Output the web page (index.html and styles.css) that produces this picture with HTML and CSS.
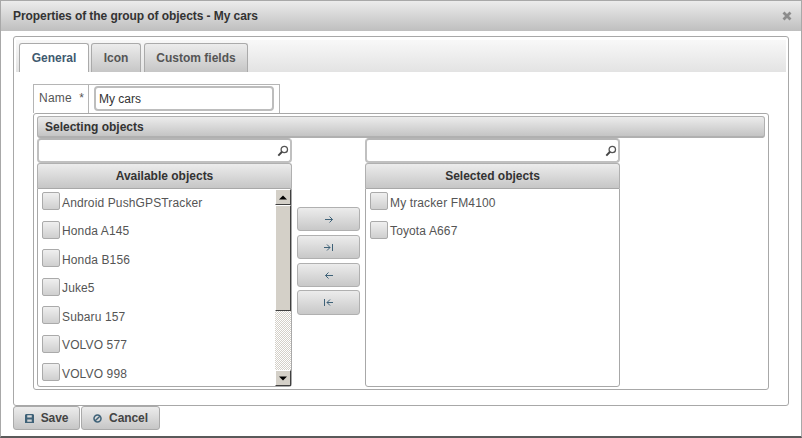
FILE: index.html
```html
<!DOCTYPE html>
<html lang="en">
<head>
<meta charset="utf-8">
<title>Properties of the group of objects</title>
<link rel="stylesheet" href="styles.css">
</head>
<body>
<div class="dialog">
  <header class="titlebar">
    <span class="title">Properties of the group of objects - My cars</span>
    <svg class="close" width="10" height="10" viewBox="0 0 10 10"><path d="M1.5 1.5l7 7M8.5 1.5l-7 7" stroke="#8c8c8c" stroke-width="2.8" fill="none"/></svg>
  </header>
  <section class="panel">
    <nav class="tabs">
      <span class="tab tab-active tab-general">General</span>
      <span class="tab tab-icon">Icon</span>
      <span class="tab tab-custom">Custom fields</span>
    </nav>
    <div class="content">
      <div class="name-row">
        <label class="name-label">Name&nbsp; *</label>
        <div class="name-cell"><input class="name-input" type="text" value="My cars"></div>
      </div>
      <div class="group">
        <div class="group-head">Selecting objects</div>
        <div class="columns">
          <div class="col">
            <div class="search">
              <input class="search-input" type="text">
              <svg class="lens" width="12" height="12" viewBox="0 0 12 12"><circle cx="7.3" cy="4.5" r="3.2" fill="none" stroke="#555" stroke-width="1.3"/><path d="M4.8 7L1.3 10.6" stroke="#444" stroke-width="1.9" fill="none"/></svg>
            </div>
            <div class="col-head">Available objects</div>
            <div class="list-wrap">
              <ul class="list">
                <li class="item"><span class="check"></span>Android PushGPSTracker</li>
                <li class="item"><span class="check"></span>Honda A145</li>
                <li class="item"><span class="check"></span>Honda B156</li>
                <li class="item"><span class="check"></span>Juke5</li>
                <li class="item"><span class="check"></span>Subaru 157</li>
                <li class="item"><span class="check"></span>VOLVO 577</li>
                <li class="item"><span class="check"></span>VOLVO 998</li>
              </ul>
              <div class="scrollbar">
                <div class="sb-btn"><svg width="8" height="5" viewBox="0 0 8 5"><path d="M4 0.5L8 4.5H0z" fill="#000"/></svg></div>
                <div class="sb-thumb"></div>
                <div class="sb-track"></div>
                <div class="sb-btn"><svg width="8" height="5" viewBox="0 0 8 5"><path d="M0 .5H8L4 4.5z" fill="#000"/></svg></div>
              </div>
            </div>
          </div>
          <div class="mid">
            <button class="move" type="button"><svg width="8" height="7" viewBox="0 0 8 7"><path d="M0 3.5H7.5M4.5 .5l3 3-3 3" class="glyph"/></svg></button>
            <button class="move" type="button"><svg width="9" height="7" viewBox="0 0 9 7"><path d="M0 3.5H6M3 .5l3 3-3 3M8.5 0V7" class="glyph"/></svg></button>
            <button class="move" type="button"><svg width="8" height="7" viewBox="0 0 8 7"><path d="M8 3.5H0.5M3.5 .5l-3 3 3 3" class="glyph"/></svg></button>
            <button class="move move-last" type="button"><svg width="9" height="7" viewBox="0 0 9 7"><path d="M9 3.5H3M6 .5l-3 3 3 3M.5 0V7" class="glyph"/></svg></button>
          </div>
          <div class="col">
            <div class="search">
              <input class="search-input" type="text">
              <svg class="lens" width="12" height="12" viewBox="0 0 12 12"><circle cx="7.3" cy="4.5" r="3.2" fill="none" stroke="#555" stroke-width="1.3"/><path d="M4.8 7L1.3 10.6" stroke="#444" stroke-width="1.9" fill="none"/></svg>
            </div>
            <div class="col-head">Selected objects</div>
            <div class="list-wrap">
              <ul class="list">
                <li class="item"><span class="check"></span>My tracker FM4100</li>
                <li class="item"><span class="check"></span>Toyota A667</li>
              </ul>
            </div>
          </div>
        </div>
      </div>
    </div>
  </section>
  <footer class="actions">
    <button class="action action-save" type="button"><svg width="9" height="9" viewBox="0 0 10 10"><path fill-rule="evenodd" d="M1 0H9L10 1V10H0V1zM2.5 1.5V4H7.5V1.5zM2.5 6V8.5H7.5V6z" fill="#3f6278"/></svg>Save</button>
    <button class="action action-cancel" type="button"><svg width="9" height="9" viewBox="0 0 10 10"><circle cx="5" cy="5" r="3.9" fill="none" stroke="#3f6278" stroke-width="1.7"/><path d="M2.4 7.6L7.6 2.4" stroke="#3f6278" stroke-width="1.6"/></svg>Cancel</button>
  </footer>
</div>
</body>
</html>
```

FILE: styles.css
```css
* { box-sizing: border-box; }

html, body { margin: 0; padding: 0; background: #fff; }

body {
  width: 802px;
  height: 438px;
  overflow: hidden;
  font-family: "Liberation Sans", Arial, sans-serif;
  font-size: 12px;
  color: #444;
}

.dialog {
  width: 802px;
  height: 438px;
  display: flex;
  flex-direction: column;
  background: #fff;
  border: 1px solid #a8a8a8;
  border-bottom: 2px solid #5a5a5a;
}

.titlebar {
  height: 30px;
  flex: none;
  display: flex;
  align-items: center;
  justify-content: space-between;
  padding: 0 9px 0 12px;
  background: linear-gradient(#ececec, #bfbfbf);
}

.title { font-weight: bold; color: #333; letter-spacing: -.07px; }

.panel {
  height: 370px;
  flex: none;
  margin: 5px 12px 0;
  padding: 3px 2px 0;
  border: 1px solid #a8a8a8;
  border-radius: 3px;
}

.tabs {
  height: 32px;
  display: flex;
  align-items: flex-end;
  padding-left: 3px;
  background: linear-gradient(#f8f8f8, #e3e3e3);
}

.tab {
  height: 29px;
  display: flex;
  align-items: center;
  justify-content: center;
  border: 1px solid #aaa;
  border-bottom: 0;
  border-radius: 3px 3px 0 0;
  font-weight: bold;
  color: #555;
  background: linear-gradient(#ececec, #c6c6c6);
}

.tab-active { background: #fff; color: #3f5a70; }
.tab-general { width: 70px; }
.tab-icon { width: 50px; margin-left: 2px; }
.tab-custom { width: 104px; margin-left: 3px; }

.content { padding: 12px 17px 0; }

.name-row {
  width: 247px;
  height: 29px;
  display: flex;
  border: 1px solid #b5b5b5;
  border-bottom: 0;
}

.name-label {
  width: 55px;
  padding: 6px 0 0 5px;
  border-right: 1px solid #b5b5b5;
  letter-spacing: .25px;
  color: #555;
}

.name-cell { padding: 1px 0 0 5px; }

.name-input {
  display: block;
  width: 180px;
  height: 25px;
  padding: 0 3px;
  border: 2px solid #bdbdbd;
  border-radius: 4px;
  outline: 0;
  font: 12px "Liberation Sans", Arial, sans-serif;
  color: #333;
  background: #fff;
}

.group {
  width: 736px;
  height: 277px;
  padding: 2px 3px;
  border: 1px solid #a8a8a8;
  border-radius: 3px;
}

.group-head {
  height: 22px;
  padding: 3px 0 0 7px;
  border: 1px solid #b0b0b0;
  border-bottom-width: 2px;
  border-radius: 3px;
  font-weight: bold;
  color: #333;
  background: linear-gradient(#ececec, #c4c4c4);
}

.columns {
  display: flex;
  gap: 5px;
  height: 249px;
}

.col {
  width: 255px;
  display: flex;
  flex-direction: column;
  border-radius: 3px;
}

.search {
  position: relative;
  height: 25px;
  flex: none;
}

.search-input {
  display: block;
  width: 100%;
  height: 25px;
  padding: 0 20px 0 4px;
  border: 2px solid #c0c0c0;
  border-top-color: #b5b5b5;
  border-radius: 4px;
  outline: 0;
  background: #fff;
}

.lens { position: absolute; right: 3px; top: 7px; }

.col-head {
  height: 25px;
  flex: none;
  padding-top: 5px;
  border: 1px solid #b0b0b0;
  border-bottom: 0;
  border-radius: 3px 3px 0 0;
  text-align: center;
  font-weight: bold;
  color: #333;
  background: linear-gradient(#ececec, #c6c6c6);
}

.list-wrap {
  flex: 1;
  min-height: 0;
  display: flex;
  border: 1px solid #a8a8a8;
  border-radius: 0 0 3px 3px;
}

.list {
  flex: 1;
  margin: 0;
  padding: 2.5px 0 0 4px;
  list-style: none;
}

.item {
  height: 28.5px;
  display: flex;
  align-items: flex-start;
  line-height: 23px;
  letter-spacing: .13px;
  color: #555;
}

.check {
  width: 18px;
  height: 18px;
  margin-top: .5px;
  margin-right: 2px;
  flex: none;
  border: 1px solid #aaa;
  border-radius: 2px;
  background: linear-gradient(#efefef, #cfcfcf);
}

.scrollbar {
  width: 16px;
  flex: none;
  display: flex;
  flex-direction: column;
}

.sb-btn {
  height: 16px;
  flex: none;
  display: flex;
  align-items: center;
  justify-content: center;
  background: #d4d0c8;
  border: 1px solid;
  border-color: #fff #404040 #404040 #fff;
}

.sb-thumb {
  height: 106px;
  flex: none;
  background: #d4d0c8;
  border: 1px solid;
  border-color: #fff #404040 #404040 #fff;
}

.sb-track {
  flex: 1;
  background: repeating-conic-gradient(#d4d0c8 0 25%, #fff 0 50%) 0 0 / 2px 2px;
}

.mid {
  width: 63px;
  flex: none;
  display: flex;
  flex-direction: column;
  gap: 4px;
  padding-top: 69px;
}

.move {
  height: 24px;
  padding: 0;
  display: flex;
  align-items: center;
  justify-content: center;
  border: 1px solid #b0b0b0;
  border-radius: 3px;
  background: linear-gradient(#ececec, #c8c8c8);
}

.move-last { height: 25px; margin-top: -1px; }

.glyph { fill: none; stroke: #3f6278; stroke-width: 1; }

.actions {
  display: flex;
  gap: 1px;
  padding-left: 12px;
}

.action {
  height: 24px;
  padding: 0;
  display: flex;
  align-items: center;
  justify-content: center;
  gap: 7px;
  border: 1px solid #aaa;
  border-radius: 3px;
  font: bold 12px "Liberation Sans", Arial, sans-serif;
  letter-spacing: -.1px;
  color: #444;
  background: linear-gradient(#ececec, #c6c6c6);
}

.action-save { width: 67px; }
.action-cancel { width: 79px; }
```
